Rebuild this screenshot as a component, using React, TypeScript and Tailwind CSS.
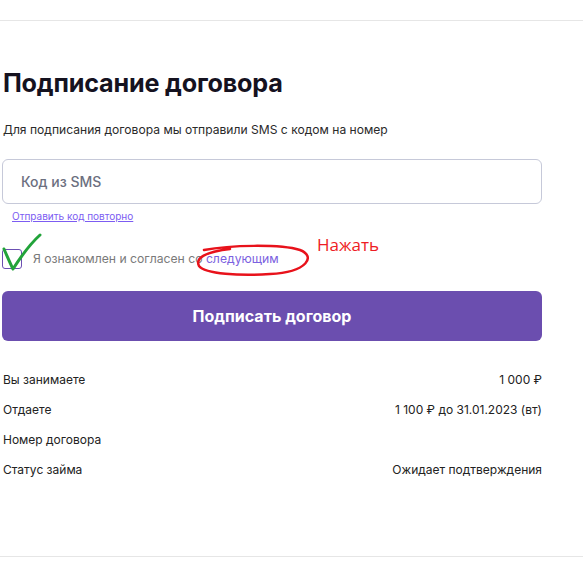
import React from "react";

export default function App() {
  const rows: [string, string][] = [
    ["Вы занимаете", "1 000 ₽"],
    ["Отдаете", "1 100 ₽ до 31.01.2023 (вт)"],
    ["Номер договора", ""],
    ["Статус займа", "Ожидает подтверждения"],
  ];
  return (
    <div className="w-[583px] h-[583px] bg-white overflow-hidden relative" style={{ fontFamily: "Inter, 'Noto Sans', sans-serif" }}>
      <div className="h-[21px] border-b border-[#e6e6e6]" />
      <div className="pl-[2px] w-[542px] flex flex-col">
        <h1 className="mt-[45px] ml-[1px] text-[25.2px] leading-[34px] font-bold text-[#15121f] tracking-[-0.2px]">Подписание договора</h1>
        <p className="mt-[22px] ml-[1px] text-[12.1px] leading-[16px] text-[#2a2a2a]">Для подписания договора мы отправили SMS с кодом на номер</p>
        <div className="mt-[21px] h-[45px] rounded-[6px] border border-[#c6c9d9] flex items-center pl-[18px]">
          <span className="text-[14px] font-medium text-[#6c6f80]">Код из SMS</span>
        </div>
        <a className="mt-[5px] ml-[10px] text-[10px] leading-[14px] text-[#7c5cf2] underline self-start">Отправить код повторно</a>
        <div className="mt-[26px] flex items-center h-[20px] relative">
          <div className="w-[20px] h-[20px] rounded-[3px] border border-[#6b4fb2]" />
          <span className="ml-[11px] text-[12.2px] text-[#7a7a7a]">
            Я ознакомлен и согласен со <span className="text-[#7b61e0]">следующим</span>
          </span>
        </div>
        <button className="mt-[22px] h-[50px] rounded-[6px] bg-[#6b4eaf] text-white text-[16px] font-bold">Подписать договор</button>
        <div className="mt-[24px] flex flex-col">
          {rows.map(([l, r]) => (
            <div key={l} className="h-[30px] flex items-center justify-between text-[12px] text-[#222]">
              <span className="ml-[1px]">{l}</span>
              <span>{r}</span>
            </div>
          ))}
        </div>
      </div>
      <div className="absolute left-0 right-0 top-[556px] border-t border-[#e6e6e6]" />
      <svg className="absolute left-0 top-0 pointer-events-none" width="583" height="583">
        <path d="M4 249 C 7 256, 10 263, 13 269 C 20 258, 30 244, 40 235" fill="none" stroke="#22a33a" strokeWidth="3" strokeLinecap="round" strokeLinejoin="round" />
        <path d="M204 250 C 230 245, 280 244, 300 250 C 316 256, 308 272, 270 274 C 240 276, 205 274, 199 266 C 195 258, 205 252, 230 249" fill="none" stroke="#e8121b" strokeWidth="2.5" strokeLinecap="round" />
      </svg>
      <span className="absolute left-[317px] top-[232px] text-[17px] text-[#ee1c24]" style={{ fontFamily: "'Open Sans', sans-serif" }}>Нажать</span>
    </div>
  );
}
